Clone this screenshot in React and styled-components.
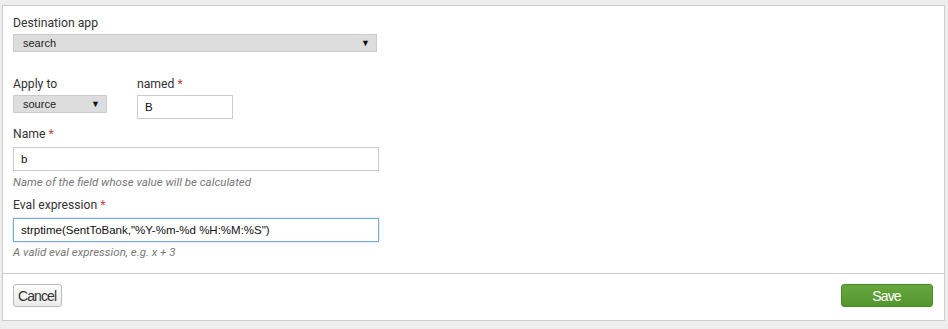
import React from "react";
import styled, { createGlobalStyle } from "styled-components";

const GlobalStyle = createGlobalStyle`
  html, body {
    margin: 0;
    padding: 0;
    background: #eeeeee;
  }
  body {
    font-family: Roboto, "Liberation Sans", sans-serif;
    color: #333333;
  }
`;

const Page = styled.div`
  width: 948px;
  height: 329px;
  padding: 5px 3px 0 2px;
  box-sizing: border-box;
`;

const Panel = styled.div`
  background: #ffffff;
  border: 1px solid #cccccc;
  height: 316px;
  box-sizing: border-box;
  display: flex;
  flex-direction: column;
`;

const Body = styled.div`
  padding: 9px 10px 0 10px;
  height: 268px;
  box-sizing: border-box;
  border-bottom: 1px solid #cccccc;
`;

const Field = styled.div`
  display: flex;
  flex-direction: column;
  margin-top: ${(p) => p.top || 0}px;
`;

const Row = styled.div`
  display: flex;
  gap: 30px;
  margin-top: ${(p) => p.top || 0}px;
`;

const Label = styled.label`
  font-size: 12.2px;
  line-height: 16px;
  color: #333333;
  margin-bottom: ${(p) => p.gap || 5}px;
`;

const Req = styled.span`
  color: #b94a48;
  margin-left: 3px;
`;

const Select = styled.div`
  width: ${(p) => p.w}px;
  height: 18px;
  box-sizing: border-box;
  background: #dddddd;
  border: 1px solid #cccccc;
  display: flex;
  align-items: center;
  justify-content: space-between;
  padding: 0 6px 0 9px;
  font-family: "Liberation Sans", Arial, sans-serif;
  font-size: 11px;
  color: #222222;
`;

const Arrow = styled.span`
  font-size: 9px;
  color: #111111;
`;

const Input = styled.div`
  width: ${(p) => p.w}px;
  height: 24px;
  box-sizing: border-box;
  background: #ffffff;
  border: 1px solid ${(p) => (p.focus ? "#7fa9d6" : "#cccccc")};
  box-shadow: ${(p) => (p.focus ? "0 0 2px rgba(82,140,210,0.5)" : "none")};
  display: flex;
  align-items: center;
  padding: 0 7px;
  font-family: "Liberation Sans", Arial, sans-serif;
  font-size: 11.5px;
  color: #111111;
`;

const Help = styled.div`
  font-size: 11.5px;
  font-style: italic;
  color: #777777;
  line-height: 14px;
  margin-top: ${(p) => p.gap || 5}px;
`;

const Footer = styled.div`
  flex: 1;
  display: flex;
  align-items: flex-start;
  justify-content: space-between;
  padding: 10px 11px 0 10px;
`;

const Button = styled.button`
  height: 23px;
  box-sizing: border-box;
  border-radius: 3px;
  font-family: "Liberation Sans", Arial, sans-serif;
  font-size: 14px;
  letter-spacing: -0.9px;
  padding: 0 5px 0 4px;
  cursor: pointer;
  border: 1px solid ${(p) => (p.primary ? "#4a8a2c" : "#bbbbbb")};
  background: ${(p) =>
    p.primary
      ? "linear-gradient(#65a83d, #559530)"
      : "linear-gradient(#fbfbfb, #ececec)"};
  color: ${(p) => (p.primary ? "#ffffff" : "#333333")};
  width: ${(p) => (p.w ? p.w + "px" : "auto")};
`;

export default function App() {
  return (
    <>
      <GlobalStyle />
      <Page>
        <Panel>
          <Body>
            <Field>
              <Label gap={3}>Destination app</Label>
              <Select w={364}>
                <span>search</span>
                <Arrow>▼</Arrow>
              </Select>
            </Field>
            <Row top={24}>
              <Field>
                <Label gap={3}>Apply to</Label>
                <Select w={94}>
                  <span>source</span>
                  <Arrow>▼</Arrow>
                </Select>
              </Field>
              <Field>
                <Label gap={3}>
                  named<Req>*</Req>
                </Label>
                <Input w={96}>B</Input>
              </Field>
            </Row>
            <Field top={7}>
              <Label gap={5}>
                Name<Req>*</Req>
              </Label>
              <Input w={366}>b</Input>
              <Help gap={4}>Name of the field whose value will be calculated</Help>
            </Field>
            <Field top={8}>
              <Label gap={5}>
                Eval expression<Req>*</Req>
              </Label>
              <Input w={366} focus>
                strptime(SentToBank,"%Y-%m-%d %H:%M:%S")
              </Input>
              <Help gap={3}>A valid eval expression, e.g. x + 3</Help>
            </Field>
          </Body>
          <Footer>
            <Button>Cancel</Button>
            <Button primary w={92}>
              Save
            </Button>
          </Footer>
        </Panel>
      </Page>
    </>
  );
}
